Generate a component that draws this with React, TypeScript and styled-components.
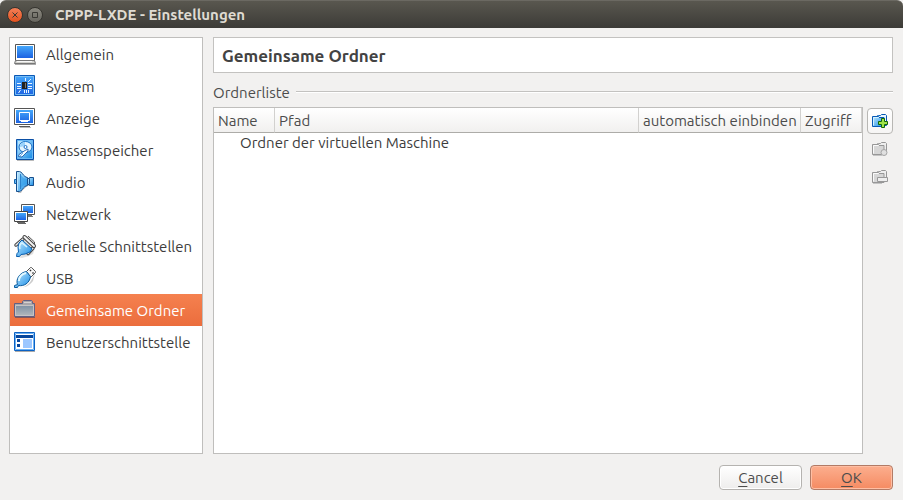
import React, { useState } from "react";
import styled, { createGlobalStyle, css } from "styled-components";

const GlobalStyle = createGlobalStyle`
  *, *::before, *::after { box-sizing: border-box; }
  body {
    margin: 0;
    background: #f2f1f0;
    color: #3c3c3c;
    font-family: Ubuntu, "Noto Sans", "Open Sans", sans-serif;
    font-size: 15px;
    line-height: 20px;
  }
  button { font: inherit; color: inherit; }
`;

const Window = styled.div`
  display: flex;
  flex-direction: column;
  min-height: 100vh;
`;

const TitleBar = styled.header`
  display: flex;
  align-items: center;
  gap: 4px;
  height: 28px;
  padding: 0 7px;
  border-top: 1px solid #6b6962;
  border-radius: 6px 6px 0 0;
  background: linear-gradient(#59574f, #3c3b37);
`;

const WindowTitle = styled.h1`
  margin: 0 0 0 8px;
  font-size: 15px;
  line-height: 20px;
  font-weight: 700;
  color: #dfdbd2;
`;

const WindowButton = styled.button<{ $close?: boolean }>`
  display: grid;
  place-items: center;
  width: 16px;
  height: 16px;
  padding: 0;
  border: 1px solid #35342f;
  border-radius: 50%;
  color: #3a3934;
  background: ${(p) =>
    p.$close ? "linear-gradient(#f58058, #e4521e)" : "linear-gradient(#8b8980, #68665f)"};
`;

const Body = styled.div`
  display: flex;
  flex: 1;
  gap: 10px;
  padding: 9px 10px 11px 9px;
`;

const Sidebar = styled.nav`
  flex: none;
  width: 194px;
  border: 1px solid #bfbebc;
  background: #fff;
`;

const Category = styled.button<{ $selected: boolean }>`
  display: flex;
  align-items: center;
  gap: 10px;
  width: 100%;
  height: 32px;
  padding: 0 4px;
  border: 0;
  background: none;
  text-align: left;
  white-space: nowrap;
  ${(p) =>
    p.$selected &&
    css`
      background: linear-gradient(#f5814f, #eb6d3d);
      color: #fff;
    `}
`;

const CategoryIcon = styled.svg`
  flex: none;
  width: 22px;
  height: 22px;
  overflow: visible;
`;

const CategoryLabel = styled.span`
  padding-top: 2px;
`;

const Page = styled.main`
  display: flex;
  flex: 1;
  flex-direction: column;
  min-width: 0;
`;

const PageTitle = styled.h2`
  margin: 0;
  padding: 8px 8px 6px;
  border: 1px solid #c3c2c0;
  background: #fff;
  font-size: 17px;
  line-height: 20px;
  font-weight: 700;
  color: #434343;
`;

const GroupHeading = styled.h3`
  display: flex;
  align-items: center;
  gap: 6px;
  margin: 10px 0 4px;
  font-size: 15px;
  line-height: 20px;
  font-weight: 400;
  color: #4c4c4c;

  &::after {
    content: "";
    flex: 1;
    height: 2px;
    margin-bottom: 2px;
    border-top: 1px solid #c3c2c0;
    background: #fff;
  }
`;

const FolderArea = styled.div`
  display: flex;
  flex: 1;
  gap: 4px;
`;

const TreeFrame = styled.div`
  flex: 1;
  min-width: 0;
  border: 1px solid #bfbebc;
  background: #fff;
`;

const FolderTable = styled.table`
  width: 100%;
  table-layout: fixed;
  border-collapse: separate;
  border-spacing: 0;
`;

const Column = styled.col<{ $width?: number }>`
  width: ${(p) => (p.$width ? `${p.$width}px` : "auto")};
`;

const HeadCell = styled.th`
  height: 25px;
  padding: 2px 0 0 4px;
  border-right: 1px solid #d2d1cf;
  border-bottom: 1px solid #adaca8;
  background: linear-gradient(#fff, #f1f0ef);
  color: #4c4c4c;
  font-weight: 400;
  text-align: left;
  white-space: nowrap;
`;

const FolderCell = styled.td`
  height: 20px;
  padding: 0 0 0 26px;
`;

const Tools = styled.div`
  display: flex;
  flex-direction: column;
  gap: 2px;
  padding-top: 1px;
`;

const ToolButton = styled.button`
  display: grid;
  place-items: center;
  width: 26px;
  height: 26px;
  padding: 0;
  border: 1px solid #b8b7b4;
  border-radius: 4px;
  background: linear-gradient(#fff, #f6f5f4);

  &:disabled {
    border-color: transparent;
    background: none;
  }
`;

const Footer = styled.footer`
  display: flex;
  justify-content: flex-end;
  gap: 8px;
  padding: 0 10px 10px;
`;

const DialogButton = styled.button<{ $primary?: boolean }>`
  width: 83px;
  height: 25px;
  padding: 0;
  border: 1px solid ${(p) => (p.$primary ? "#b27b66" : "#b5b3b0")};
  border-radius: 4px;
  background: ${(p) =>
    p.$primary ? "linear-gradient(#fcae8e, #f58b62)" : "linear-gradient(#fff, #eeedec)"};
  box-shadow: inset 0 0 0 1px ${(p) => (p.$primary ? "#ffbfa4" : "#fff")};
  color: #4c4c4c;
`;

const Mnemonic = styled.span`
  text-decoration: underline;
  text-decoration-thickness: 1px;
  text-underline-offset: 3px;
`;

const blue = "url(#blue)";
const pale = "url(#pale)";

const Gradients = styled.svg`
  position: absolute;
  width: 0;
  height: 0;
`;

const icons: Record<string, React.ReactNode> = {
  general: (
    <>
      <path d="M1.5 1.5h19v16h-19z" fill="#fff" stroke="#555" />
      <path d="M3 3h16v12H3z" fill={blue} />
      <path d="M1.5 17.5h19l1 3h-21z" fill="#d4d4d0" stroke="#777" />
      <path d="M3 18.5h15" stroke="#f8f8f8" />
      <path d="M1 21.5h21" stroke="#aaa" />
    </>
  ),
  system: (
    <>
      <path d="M.5.5h20v20H.5z" fill={blue} stroke="#0b58b5" />
      <path d="M1.5 1.5h18v18h-18z" fill="none" stroke="#78bdf5" />
      <path d="M3 8.5h4M3 11.5h4M3 13.5h4M14 8.5h4M14 11.5h4M14 13.5h4M11.5 3v3M17 4l-3 3M10.5 15v3M12.5 15v3M14.5 15v3M6.5 15l-2 3" stroke="#e9f6ff" />
      <path d="M8 7h5v7H8z" fill="#222" />
      <path d="M11 8h1v5h-1z" fill="#777" />
    </>
  ),
  display: (
    <>
      <path d="M.5 1.5h20v16H.5z" fill="#fff" stroke="#555" />
      <path d="M2 3h17v13H2z" fill={blue} />
      <path d="M5.5 5.5h10v8h-10z" fill="none" stroke="#fff" />
      <path d="M7 14.5h7" stroke="#fff" />
      <path d="M3.5 17.5h14M5 19.5h11" stroke="#555" />
      <path d="M5 18.5h11" stroke="#fff" />
      <path d="M6 20.5h11" stroke="#bbb" />
    </>
  ),
  storage: (
    <>
      <path d="M2.5.5h17v20h-17z" fill="#2d90e8" stroke="#0b4fa5" />
      <path d="M3.5 1.5h15v18h-15z" fill={pale} stroke="#69b8f6" />
      <ellipse cx="11.5" cy="8" rx="6.5" ry="5.5" fill="#e4f5ff" stroke="#1671c8" />
      <path d="M6 8a6 5 0 0 1 5-5l0 4z" fill="#9bd3fb" />
      <circle cx="11.5" cy="8" r="1.5" fill="#fff" stroke="#1a6ec8" />
      <path d="m4.5 17.5.5-2 6-4 3-1.5v2L8 18z" fill="#f3fbff" stroke="#0b4fa5" strokeWidth=".8" />
      <path d="m6 17 3-3" stroke="#6bb3f2" />
      <path d="M3 21.5h17" stroke="#bbb" />
    </>
  ),
  audio: (
    <>
      <path d="M4 21.5h3c1-3 4-5 7-7h6" fill="none" stroke="#aaa" opacity=".7" />
      <path d="M.5 8.5h2v4h-2z" fill="#62b9f7" stroke="#1465af" />
      <path d="M2.5.5h3c2 0 3 3 5.500 5l3 1.5v7l-3 1.5c-2.500 2-3.500 5-5.500 5h-3z" fill={pale} stroke="#174f8d" />
      <path d="M3.5 1.5v18" stroke="#bfe8ff" />
      <path d="M6.5 3v15" stroke="#2d83cc" />
      <path d="M7 4c2 3 4 4 6 4v5c-2 0-4 1-6 4z" fill="#2d9bea" opacity=".6" />
      <path d="M13.5 7.5h2v-1h4v8h-4v-1h-2z" fill={pale} stroke="#174f8d" />
      <path d="M15.5 8v5" stroke="#174f8d" />
    </>
  ),
  network: (
    <>
      <path d="M7.5 1.5h13v10h-13z" fill="#fff" stroke="#555" />
      <path d="M9 3h10v7H9z" fill={blue} />
      <path d="M10 12.5h8M11 13.5h8" stroke="#777" />
      <path d="M.5 8.5h13v10H.5z" fill="#fff" stroke="#444" />
      <path d="M2 10h10v7H2z" fill={blue} />
      <path d="M3 19.5h8M4 20.5h8" stroke="#666" />
    </>
  ),
  serial: (
    <>
      <path d="m9 2 4-1 9 9-1 3-2 6-4 2-7 2-5-1z" fill="#999" opacity=".3" />
      <path d="m2 10 7-6M14 18.5l5-5.5" stroke="#444" strokeWidth="3.5" strokeLinecap="round" />
      <path d="m2 10 7-6M14 18.5l5-5.5" stroke="#e8e8e8" strokeWidth="1.5" strokeLinecap="round" />
      <path d="m5 8 3-3 10 9-2 3-5 2-4 .5-1.5 2h-3l.5-3 1.5-1.5L4 12z" fill={pale} stroke="#0a5fae" />
      <path d="M6 14c-1-3 0-5 2-6l5 4" stroke="#d9f3ff" strokeWidth="1.5" fill="none" />
      <path d="m10.5 2 9.5 9" stroke="#444" strokeWidth="4" strokeLinecap="round" />
      <path d="m10.5 2 9.5 9" stroke="#f2f2f2" strokeWidth="2" strokeLinecap="round" />
      <path d="m14 1 6.5 6v3" stroke="#555" fill="none" />
    </>
  ),
  usb: (
    <>
      <path d="M2 21c7 1 13-3 16-9l3-6-2 8c-4 5-9 7-14 7z" fill="#999" opacity=".5" />
      <path d="m12.5 4.5 4-4h1l4 4v1l-5 5z" fill="#f6f6f6" stroke="#555" />
      <path d="m16 3 1 1M18.5 5.5l1 1" stroke="#333" strokeWidth="1.5" />
      <path d="M3.5 17.5c-2-5 2-12 9-13l4 5c-1 7-7 10-12 9l-1 2h-3v-2z" fill={pale} stroke="#0a5b9d" />
      <path d="M5 14c0-4 3-7 7-8" stroke="#e1f7ff" fill="none" strokeWidth="2" />
    </>
  ),
  folders: (
    <>
      <path d="M8.5 4.5v-2l1-1h8l1 1v2h2v13H.5v-13z" fill="#a8a6aa" stroke="#626084" />
      <path d="M1.5 6.5h18v10h-18z" fill="url(#folder)" stroke="#c6c3c4" />
      <path d="M10 3.5h7" stroke="#d5d1d1" />
      <path d="M1 18.5h20" stroke="#865656" />
    </>
  ),
  interface: (
    <>
      <path d="M.5 1.5h20v18H.5z" fill="#fff" stroke="#0b62c4" />
      <path d="M1.5 2.5h18v16h-18z" fill="none" stroke="#6cb1f4" />
      <path d="M2 4h17v3H2z" fill="#07479d" />
      <path d="M3 8h3v3H3zM3 13h3v3H3z" fill="#07479d" />
      <path d="M9 8h9v9H9z" fill="#9cc7ff" />
      <path d="M1 20.5h20" stroke="#aaa" />
    </>
  ),
};

const categories = [
  ["general", "Allgemein"],
  ["system", "System"],
  ["display", "Anzeige"],
  ["storage", "Massenspeicher"],
  ["audio", "Audio"],
  ["network", "Netzwerk"],
  ["serial", "Serielle Schnittstellen"],
  ["usb", "USB"],
  ["folders", "Gemeinsame Ordner"],
  ["interface", "Benutzerschnittstelle"],
];

function FolderIcon({ kind }: { kind: "add" | "edit" | "remove" }) {
  const add = kind === "add";
  const line = add ? "#0759b5" : "#979797";
  return (
    <svg width="16" height="16" viewBox="0 0 16 16" aria-hidden="true">
      <path
        d="M5.5 4V2.5h3l1-1h4l1 1v10h-2"
        fill={add ? "#e9f7ff" : "#eee"}
        stroke={line}
      />
      <path d="M.5 3.5h6l1-1M7 4.500h5v9H.5v-10" fill={add ? pale : "#d6d6d6"} stroke={line} />
      <path d="M1.5 12.5v-8h5" fill="none" stroke={add ? "#d3f1ff" : "#fafafa"} />
      {add && (
        <path d="M9.5 5.5h3v3h3v3h-3v3h-3v-3h-3v-3h3z" fill="#a0e449" stroke="#12660b" />
      )}
      {kind === "edit" && <circle cx="12" cy="11.5" r="3" fill="#e0e0e0" stroke="#a5a5a5" />}
      {kind === "remove" && <path d="M5.5 8.5h10v4h-10z" fill="#eee" stroke="#999" />}
      {!add && <path d="M1 14.5h9" stroke="#c4c4c4" />}
    </svg>
  );
}

export default function App() {
  const [selected, setSelected] = useState("folders");
  return (
    <Window>
      <GlobalStyle />
      <Gradients aria-hidden="true">
        <defs>
          <linearGradient id="blue" x1="0" y1="0" x2="0" y2="1">
            <stop stopColor="#45a7fa" />
            <stop offset="1" stopColor="#1b62e2" />
          </linearGradient>
          <linearGradient id="pale" x1="0" y1="0" x2="1" y2="1">
            <stop stopColor="#c8edff" />
            <stop offset="1" stopColor="#168be6" />
          </linearGradient>
          <linearGradient id="folder" x1="0" y1="0" x2="0" y2="1">
            <stop stopColor="#7d91a4" />
            <stop offset="1" stopColor="#b1b6bb" />
          </linearGradient>
        </defs>
      </Gradients>
      <TitleBar>
        <WindowButton $close aria-label="Schließen">
          <svg width="8" height="8" viewBox="0 0 8 8" aria-hidden="true">
            <path d="m1.5 1.5 5 5m0-5-5 5" stroke="currentColor" />
          </svg>
        </WindowButton>
        <WindowButton aria-label="Maximieren">
          <svg width="8" height="8" viewBox="0 0 8 8" aria-hidden="true">
            <path d="M1.5 1.5h5v5h-5z" fill="none" stroke="currentColor" />
          </svg>
        </WindowButton>
        <WindowTitle>CPPP-LXDE - Einstellungen</WindowTitle>
      </TitleBar>
      <Body>
        <Sidebar>
          {categories.map(([id, label]) => (
            <Category
              key={id}
              $selected={id === selected}
              aria-current={id === selected ? "page" : undefined}
              onClick={() => setSelected(id)}
            >
              <CategoryIcon viewBox="0 0 22 22" aria-hidden="true">
                {icons[id]}
              </CategoryIcon>
              <CategoryLabel>{label}</CategoryLabel>
            </Category>
          ))}
        </Sidebar>
        <Page>
          <PageTitle>Gemeinsame Ordner</PageTitle>
          <GroupHeading>Ordnerliste</GroupHeading>
          <FolderArea>
            <TreeFrame>
              <FolderTable aria-label="Ordnerliste">
                <colgroup>
                  <Column $width={61} />
                  <Column />
                  <Column $width={162} />
                  <Column $width={61} />
                </colgroup>
                <thead>
                  <tr>
                    <HeadCell>Name</HeadCell>
                    <HeadCell>Pfad</HeadCell>
                    <HeadCell>automatisch einbinden</HeadCell>
                    <HeadCell>Zugriff</HeadCell>
                  </tr>
                </thead>
                <tbody>
                  <tr>
                    <FolderCell colSpan={4}>Ordner der virtuellen Maschine</FolderCell>
                  </tr>
                </tbody>
              </FolderTable>
            </TreeFrame>
            <Tools>
              <ToolButton aria-label="Ordner hinzufügen">
                <FolderIcon kind="add" />
              </ToolButton>
              <ToolButton disabled aria-label="Ordner ändern">
                <FolderIcon kind="edit" />
              </ToolButton>
              <ToolButton disabled aria-label="Ordner entfernen">
                <FolderIcon kind="remove" />
              </ToolButton>
            </Tools>
          </FolderArea>
        </Page>
      </Body>
      <Footer>
        <DialogButton>
          <Mnemonic>C</Mnemonic>ancel
        </DialogButton>
        <DialogButton $primary>
          <Mnemonic>O</Mnemonic>K
        </DialogButton>
      </Footer>
    </Window>
  );
}
